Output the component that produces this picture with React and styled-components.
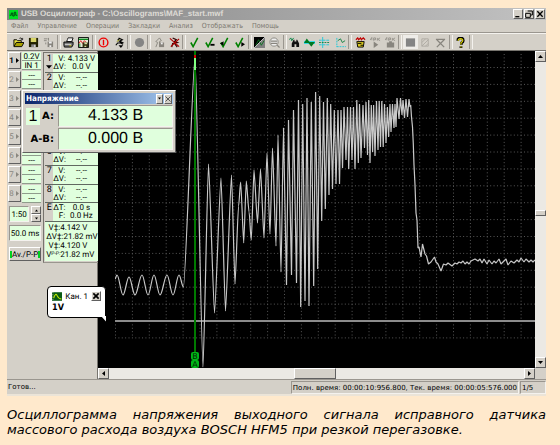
import React from 'react'
import styled, { createGlobalStyle, css } from 'styled-components'

const GlobalStyle = createGlobalStyle`
  * {
    box-sizing: border-box;
  }
  body {
    margin: 0;
    background: #ffe9cc;
    font-family: Roboto, "Liberation Sans", sans-serif;
    font-size: 8px;
    color: #000;
    text-rendering: geometricPrecision;
  }
  button, input {
    font: inherit;
    color: inherit;
    text-rendering: inherit;
    margin: 0;
    padding: 0;
    border-radius: 0;
  }
`

const raised = css`
  border: 1px solid;
  border-color: #fff #606060 #606060 #fff;
  background: #d4d0c8;
`

const sunken = css`
  border: 1px solid;
  border-color: #9a968f #f4f2ee #f4f2ee #9a968f;
`

const Page = styled.main`
  padding: 8px 14px 0 7px;
`

const Window = styled.section`
  position: relative;
  background: #d4d0c8;
  border-bottom: 2px solid #ebe4d8;
`

const TitleBar = styled.header`
  display: flex;
  align-items: center;
  gap: 3px;
  height: 12px;
  padding: 0 1px 0 2px;
  background: linear-gradient(90deg, #828282, #c2c2c2);
`

const Title = styled.h1`
  flex: 1;
  margin: 0;
  font-family: "Liberation Sans", sans-serif;
  font-size: 8px;
  line-height: 12px;
  font-weight: 700;
  color: #dedbd5;
  white-space: nowrap;
`

const WindowButtons = styled.div`
  display: flex;
  gap: 1px;
`

const CaptionButton = styled.button`
  ${raised}
  display: flex;
  align-items: center;
  justify-content: center;
  width: ${({ $size }) => $size || 10}px;
  height: 10px;
`

const Menu = styled.nav`
  display: flex;
  gap: 9px;
  height: 13px;
  padding-left: 4px;
  border-bottom: 1px solid #9a968f;
`

const MenuLink = styled.a`
  color: #7c7971;
  font-family: "DejaVu Sans Condensed", "DejaVu Sans", sans-serif;
  font-size: 7px;
  line-height: 12px;
  text-decoration: none;
`

const Toolbar = styled.div`
  display: flex;
  align-items: center;
  height: 18px;
  padding: 0 73px 0 4px;
  border-top: 1px solid #f4f2ee;
  border-bottom: 1px solid #77746e;
`

const ToolButton = styled.button`
  flex: 1;
  max-width: 16px;
  height: 14px;
  display: flex;
  align-items: center;
  justify-content: center;
  border: 0;
  background: ${({ $pressed }) => ($pressed ? '#eeece8' : 'none')};
`

const Separator = styled.span`
  width: 5px;
  height: 14px;
  display: flex;
  justify-content: center;

  &::before {
    content: '';
    width: 2px;
    border-left: 1px solid #9a968f;
    border-right: 1px solid #f4f2ee;
  }
`

const Workspace = styled.div`
  display: flex;
`

const SidePanel = styled.aside`
  display: flex;
  align-items: flex-start;
  gap: 1px;
  width: 91px;
  border-right: 1px solid #77746e;
`

const Controls = styled.div`
  width: 38px;
  padding: 1px 1px 0 1px;
  display: flex;
  flex-direction: column;
`

const Channel = styled.div`
  display: grid;
  grid-template-columns: 13px 1fr;
  gap: 1px;
  height: 19px;
`

const ChannelButton = styled.button`
  ${raised}
  height: 17px;
  display: flex;
  align-items: center;
  justify-content: center;
  gap: 1px;
  font-weight: ${({ $active }) => ($active ? 700 : 400)};
  color: ${({ $active }) => ($active ? '#000' : '#8a877f')};
`

const ChannelInfo = styled.div`
  display: flex;
  flex-direction: column;
`

const Cell = styled.span`
  height: 9px;
  line-height: 9px;
  text-align: center;
  background: #e0ffdd;
  border-bottom: 1px solid #8f9c8c;
`

const Settings = styled.div`
  display: flex;
  flex-direction: column;
  gap: 3px;
  padding: 2px 0 0 1px;
`

const Scale = styled.div`
  display: flex;
  gap: 2px;
  align-items: center;
`

const Field = styled.input`
  ${sunken}
  flex: 1;
  width: 100%;
  min-width: 0;
  min-height: 16px;
  background: #e0ffdd;
  text-align: center;
`

const Spinner = styled.div`
  width: 10px;
  display: flex;
  flex-direction: column;
`

const SpinButton = styled.button`
  ${raised}
  height: 8px;
  display: flex;
  align-items: center;
  justify-content: center;
`

const ModeButton = styled.button`
  ${raised}
  display: flex;
  align-items: center;
  justify-content: space-between;
  height: 14px;
  margin-top: 3px;
  white-space: nowrap;
`

const Lamp = styled.span`
  width: 2px;
  height: 7px;
  background: #00d020;
`

const Readings = styled.div`
  flex: 1;
  margin: 1px 1px 0 0;
  padding: 1px;
  border: 1px solid;
  border-color: #77746e #fff #9a968f #77746e;
`

const ReadingList = styled.div`
  display: grid;
  grid-template-rows: repeat(9, 1fr);
  height: 168px;
`

const Reading = styled.div`
  display: grid;
  grid-template-columns: 8px 1fr;
  border-bottom: 1px solid #606860;
`

const ReadingName = styled.span`
  display: flex;
  flex-direction: column;
  align-items: center;
  background: #d4d0c8;
  font-size: 9px;
  line-height: 10px;
`

const ReadingValues = styled.div`
  background: #e0ffdd;
`

const Value = styled.div`
  display: flex;
  height: 8px;
  line-height: 9px;
  white-space: nowrap;
`

const ValueLabel = styled.span`
  width: 12px;
  text-align: right;
`

const ValueText = styled.span`
  flex: 1;
  text-align: center;
`

const Summary = styled.div`
  padding: 1px 0 2px 1px;
  background: #e0ffdd;
`

const SummaryLine = styled.div`
  display: flex;
  height: 9px;
  line-height: 9px;
  white-space: nowrap;
`

const SummaryLabel = styled.span`
  flex: 0 0 14px;
  display: flex;
  justify-content: flex-end;
`

const Sub = styled.small`
  font-size: 5px;
`

const Scope = styled.div`
  flex: 1;
  display: grid;
  grid-template-columns: 1fr 11px;
  grid-template-rows: auto 11px;
`

const Screen = styled.svg`
  display: block;
  width: 100%;
  height: auto;
  background: #000;
`

const ScrollBar = styled.div`
  display: flex;
  flex-direction: ${({ $vertical }) => ($vertical ? 'column' : 'row')};
  background: #ebe9e4;
`

const ScrollButton = styled.button`
  ${raised}
  width: 11px;
  height: 11px;
  flex: none;
  display: flex;
  align-items: center;
  justify-content: center;
`

const ScrollTrack = styled.div`
  flex: 1;
  display: flex;
  flex-direction: inherit;
`

const ScrollSpace = styled.span`
  flex: ${({ $grow }) => $grow};
`

const ScrollThumb = styled.span`
  ${raised}
  flex: 0 0 ${({ $size }) => $size}px;
`

const StatusBar = styled.footer`
  display: flex;
  gap: 1px;
  height: 15px;
  border-top: 1px solid #9a968f;
  padding-top: 1px;
  font-family: "DejaVu Sans", sans-serif;
  font-size: 7px;
  line-height: 12px;
`

const Status = styled.span`
  flex: 1;
  padding-left: 1px;
`

const StatusPanel = styled.span`
  ${sunken}
  min-width: ${({ $width }) => $width}px;
  padding: 0 1px;
  white-space: nowrap;
`

const Palette = styled.section`
  position: absolute;
  left: 15px;
  top: 82px;
  width: 154px;
  padding: 2px;
  ${raised}
`

const PaletteBar = styled.header`
  display: flex;
  align-items: center;
  justify-content: space-between;
  height: 11px;
  padding: 0 1px;
  background: linear-gradient(90deg, #0a246a, #a6caf0);
`

const PaletteTitle = styled.h2`
  margin: 0;
  font-family: "DejaVu Sans Condensed", "DejaVu Sans", sans-serif;
  font-size: 8px;
  line-height: 11px;
  color: #fff;
`

const PaletteGrid = styled.div`
  display: grid;
  grid-template-columns: 32px 1fr;
  gap: 1px;
  padding-top: 1px;
`

const PaletteLabel = styled.div`
  display: flex;
  align-items: center;
  justify-content: flex-end;
  gap: 2px;
  padding-right: 3px;
  font-family: "DejaVu Sans", sans-serif;
  font-size: 10px;
  font-weight: 700;
`

const PaletteChannel = styled.span`
  width: 14px;
  line-height: 17px;
  text-align: center;
  background: #e0ffdd;
  font-family: "Liberation Sans", sans-serif;
  font-size: 16px;
  font-weight: 400;
`

const PaletteValue = styled.output`
  ${sunken}
  height: 22px;
  line-height: 20px;
  text-align: center;
  background: #e0ffdd;
  font-family: "Liberation Sans", sans-serif;
  font-size: 16px;
`

const Callout = styled.div`
  position: absolute;
  left: 40px;
  top: 278px;
  width: 59px;
  height: 32px;
  padding: 3px 4px;
  background: #fff;
  border: 1px solid #000;
  border-radius: 4px 4px 0 4px;
`

const CalloutTail = styled.svg`
  position: absolute;
  right: -1px;
  top: 29px;
`

const CalloutHead = styled.div`
  display: flex;
  align-items: center;
  gap: 3px;
  height: 12px;
`

const CalloutName = styled.span`
  flex: 1;
  white-space: nowrap;
`

const CalloutValue = styled.strong`
  display: block;
  font-family: "DejaVu Sans Condensed", "DejaVu Sans", sans-serif;
  font-size: 9px;
  line-height: 12px;
`

const Caption = styled.p`
  margin: 11px 0 0;
  font-family: "DejaVu Sans", sans-serif;
  font-size: 13px;
  line-height: 15px;
  font-style: italic;
  text-align: justify;
  text-rendering: auto;
`

const Icon = ({ children, size = 12 }) => (
  <svg width={size} height={size} viewBox="0 0 12 12" fill="none" aria-hidden="true">
    {children}
  </svg>
)

const Arrow = ({ dir, size = 5 }) => {
  const points = {
    up: '0,4 5,4 2.5,1',
    down: '0,1 5,1 2.5,4',
    left: '4,0 4,5 1,2.5',
    right: '1,0 1,5 4,2.5',
  }
  return (
    <svg width={size} height={size} viewBox="0 0 5 5" aria-hidden="true">
      <polygon points={points[dir]} fill="currentColor" />
    </svg>
  )
}

const Check = ({ children }) => (
  <>
    <path d="M2 6l2.500 4.500L9.500 1" stroke="#008000" strokeWidth="1.700" />
    {children}
  </>
)

const Eprom = ({ children }) => (
  <>
    <path d="M0 3.500L2 .500M2 .500v3M4 4V1h2v2H4M8 4V1M11 1L8.500 2.500 11 4" stroke="#88857e" strokeWidth=".8" />
    {children}
  </>
)

const icons = {
  open: (
    <>
      <path d="M1 10V3h3l1 1h4v2" fill="#e8e040" stroke="#000" />
      <path d="M1 10.500L3.500 6H12L9.500 10.500z" fill="#a8a000" stroke="#000" />
      <path d="M7 1.500q2-1.500 3 1M10.500 1v2h-2" stroke="#000" strokeWidth=".8" />
    </>
  ),
  save: (
    <>
      <path d="M1 1h10v10H1z" fill="#202000" />
      <path d="M3 1h6v4.500H3z" fill="#d8d468" />
      <path d="M3.500 8h5v3h-5z" fill="#888" />
      <path d="M7 8.500h1V11H7z" fill="#fff" />
    </>
  ),
  copy: (
    <>
      <path d="M5 5h6v6H5z" fill="#88857e" />
      <path d="M6.500 5h3v2h-3zM7 9h2v2H7z" fill="#eee" />
      <path d="M1 2h4M1 4h3M6 1v3M3 6v2" stroke="#88857e" />
    </>
  ),
  print: (
    <>
      <path d="M4 5l1.500-4H11L9.500 5z" fill="#fff" stroke="#000" />
      <path d="M1 5.500h10v3L9.500 11h-8L1 9z" fill="#707070" stroke="#000" />
      <path d="M2 8h7M5 2.500h4" stroke="#ddd" />
      <path d="M7 9.500h2" stroke="#d0c000" />
    </>
  ),
  exportChart: (
    <>
      <path d="M.5.500h11v11H.500z" fill="#e8e8d8" stroke="#000" />
      <path d="M1 2.500h10" stroke="#0b8a20" strokeWidth="1.500" />
      <path d="M1 7l2-3 2 3 2-3 2 2" stroke="#e02020" />
      <path d="M5 6h6v5H5z" fill="#303010" />
      <path d="M7 6h3v2H7zM7 9.500h2V11H7z" fill="#d8d8a0" />
      <path d="M2 7v4" stroke="#0b8a20" />
    </>
  ),
  power: (
    <>
      <circle cx="6" cy="6" r="4.800" stroke="#f00000" strokeWidth="1.500" />
      <path d="M6 3v6" stroke="#f00000" strokeWidth="1.500" />
    </>
  ),
  run: (
    <>
      <path d="M5 1l4 2-3 1.500L9 6 4 6.500 2 9M6 6l4 2M4 3l2-1" stroke="#000" strokeWidth="1.300" />
      <path d="M5 9h5L7.500 12z" fill="#000" />
      <path d="M3 5l3-2" stroke="#909000" />
    </>
  ),
  record: <circle cx="6" cy="6" r="5" fill="#848484" />,
  hand: (
    <>
      <path d="M2 11L4 6 2 5l4-4 2 3-2 1v6" stroke="#88857e" />
      <path d="M6 6h5v5H6z" fill="#88857e" />
      <path d="M7.500 6h2v2h-2z" fill="#eee" />
    </>
  ),
  stopRun: (
    <>
      <path d="M4 1l4 2-2 2 3 1-5 1-1 4M6 7l3 4" stroke="#300" strokeWidth="1.300" />
      <path d="M1 1.500l10 9M11 2L2 10.500" stroke="#b00000" strokeWidth="1.300" />
    </>
  ),
  check: <Check />,
  checkMinus: <Check><path d="M7 8.500h4.500" stroke="#000" strokeWidth="2" /></Check>,
  checkPrev: <Check><path d="M5 4.500v5L1 7z" fill="#000" /></Check>,
  checkNext: <Check><path d="M8 5.500v5l4-2.500z" fill="#000" /></Check>,
  invert: (
    <>
      <path d="M0 0h12L0 12z" fill="#000" />
      <path d="M12 0v12H0z" fill="#808080" />
      <path d="M2 9l3-6 3 6 3-5" stroke="#0a7020" />
      <path d="M0 12L12 0" stroke="#ddd" strokeWidth=".8" />
    </>
  ),
  zoomText: (
    <>
      <circle cx="5.500" cy="5.500" r="4.500" fill="#eee" stroke="#88857e" />
      <path d="M2 4.500h7M2 7h7M9 9l2.500 2.500" stroke="#88857e" strokeWidth="1.300" />
    </>
  ),
  find: (
    <>
      <path d="M0 3l2-2 1 3 2-3" stroke="#008040" />
      <path d="M3 11V7l2-4h1v2h2V3h1l2 4v4H8V8H6v3z" fill="#101010" />
    </>
  ),
  wave: (
    <>
      <path d="M0 4.500h12v3H0z" fill="#20d8e8" />
      <path d="M0 6.500l3-5 4 5H0zM4 5.500h8l-4 5z" fill="#007820" />
    </>
  ),
  levels: (
    <>
      <path d="M0 3.500h12M0 8.500h12" stroke="#20c8d8" strokeDasharray="3 1" />
      <path d="M4 0v12" stroke="#20c8d8" />
      <path d="M0 6h12" stroke="#108040" strokeDasharray="2 1" />
    </>
  ),
  points: (
    <>
      <path d="M2 1v10M2 10.500h10" stroke="#20c8d8" strokeDasharray="2 1" />
      <path d="M3 4l3-2 2 4 3-2" stroke="#108040" />
    </>
  ),
  chip: (
    <>
      <path d="M1 3l2-2 1 2 2-2 1 2 2-2 2 2" stroke="#c00000" strokeWidth="1.300" />
      <path d="M2 5h8l-1 6H3z" fill="#d8c820" stroke="#000" />
      <path d="M3 7h4M6 9h3" stroke="#000" />
    </>
  ),
  epromPlay: <Eprom><path d="M4 5v7l5-3.500z" fill="#88857e" /></Eprom>,
  epromStop: <Eprom><path d="M2 6h8v5.500H2zM4.500 4.500h3V6h-3z" fill="#88857e" /></Eprom>,
  block: <path d="M1 1.500h10v9H1z" fill="#848484" />,
  hatch: (
    <path d="M2 2h7v8H2zM2 6l4-4M2 10l7-7M6 10l3-3" stroke="#aaa69f" strokeWidth=".9" />
  ),
  cross: <path d="M1 2.500h10M2 3l8 8M10 3L2 11" stroke="#88857e" strokeWidth="1.400" />,
  help: (
    <>
      <path d="M3 4q0-3 3-3t3 3q0 1.500-2 2.500v2M6.500 10v2" stroke="#000" strokeWidth="3" />
      <path d="M3.500 4q0-2.300 2.500-2.300T8.500 4q0 1-2 2.200v2M6.500 10v1.500" stroke="#d8d000" strokeWidth="1.300" />
    </>
  ),
  app: (
    <>
      <path d="M0 0h12v12H0z" fill="#00e020" />
      <path d="M1 7h2V4h2v4h2V3h2v4h2" stroke="#004010" strokeWidth="1.200" />
    </>
  ),
  channel: (
    <>
      <path d="M0 1h12v10H0z" fill="#0a5a14" />
      <path d="M1 1v10" stroke="#d0d0d0" strokeDasharray="1 1" />
      <path d="M2 8q2-7 4-3t5 4" stroke="#c8f000" strokeWidth="1.200" />
    </>
  ),
}

const tools = [
  [['open', 'Открыть'], ['save', 'Сохранить'], ['copy', 'Копировать']],
  [['print', 'Печать'], ['exportChart', 'Экспорт']],
  [['power', 'Питание'], ['run', 'Пуск']],
  [['record', 'Запись']],
  [['hand', 'Сохранить настройки'], ['stopRun', 'Стоп']],
  [['check', 'Закладка'], ['checkMinus', 'Удалить закладку'], ['checkPrev', 'Назад'], ['checkNext', 'Вперёд']],
  [['invert', 'Инверсия'], ['zoomText', 'Масштаб']],
  [['find', 'Поиск'], ['wave', 'Сигнал'], ['levels', 'Уровни'], ['points', 'Точки']],
  [['chip', 'Сценарий'], ['epromPlay', 'Выполнить'], ['epromStop', 'Прервать']],
  [['block', 'Панель'], ['hatch', 'Область'], ['cross', 'Очистить']],
  [['help', 'Справка']],
]

const menu = ['Файл', 'Управление', 'Операции', 'Закладки', 'Анализ', 'Отображать', 'Помощь']

const channels = [1, 2, 3, 4, 5, 6, 7, 8]

const readings = [
  { name: '1', rows: [['V:', '4.133 V'], ['ΔV:', '0.0 V']] },
  ...[2, 3, 4, 5, 6, 7, 8].map((n) => ({ name: n, rows: [['V:', '--.--'], ['ΔV:', '--.--']] })),
  { name: 'E', rows: [['ΔT:', '0.0 s'], ['F:', '0.0 Hz']] },
]

const summary = [
  { label: 'V‡:', value: '4.142 V' },
  { label: 'ΔV‡:', value: '21.82 mV' },
  { label: 'V‡:', value: '4.120 V' },
  { label: 'V', sub: 'P-P', value: '21.82 mV' },
]

// turning points of the signal: idle ripple, first surge, then the slower swings
const swings = [
  [115, 279], [117, 275], [123, 295], [129, 277], [135, 295], [142, 275], [148, 295],
  [154, 275], [160, 295], [167, 275], [173, 295], [179, 275], [183.5, 287], [195, 57],
  [203, 367], [208.5, 164], [214.5, 313], [221, 178], [225.5, 311], [231.5, 175],
  [235, 284], [238.5, 206], [240.7, 182], [243.7, 243], [246.3, 181], [249, 212],
  [251.3, 240], [254, 170], [257.5, 223], [260.5, 169], [264, 238], [267, 153],
  [270, 234], [272.5, 148], [276, 246], [278, 135], [281, 272], [283.5, 128],
]

// rev-up burst and the fall back to idle
const burst = [
  [286.5, 285], [288.5, 120], [291.5, 275], [293.5, 110], [296.5, 283], [298.5, 100],
  [300.7, 307], [302.7, 104], [305, 301], [307, 98], [309, 306], [311.3, 102],
  [313.7, 286], [315.6, 92], [317.7, 269], [319.7, 96], [321.7, 221], [323.5, 102],
  [325.3, 209], [327.3, 98], [329, 195], [330.7, 104], [332.5, 189], [334.3, 110],
  [336, 184], [338, 110], [339.5, 184], [341, 110], [342.5, 168], [344, 107],
  [346, 160], [347.5, 107], [348.7, 169], [350.5, 107], [352, 160], [353.5, 107],
  [355, 169], [356.8, 100], [358.3, 163], [359.5, 104], [361, 158], [363, 105],
  [364.5, 148], [366, 102], [367.5, 155], [368.7, 100], [370, 163], [371.3, 105],
  [372.6, 152], [373.6, 105], [375, 156], [376.5, 101], [378, 150], [379.2, 101],
  [380.5, 147], [381.8, 101], [383.2, 147], [384.5, 104], [386, 143], [387.4, 107],
  [388.6, 137], [390, 104], [391, 132], [392.5, 104], [394, 128], [395, 104],
  [396, 127], [397, 98], [399, 119], [400.5, 98], [402, 115], [403, 100],
  [404.5, 118], [406, 99], [407.5, 117], [409, 99], [410, 107], [410.7, 105],
  [411.5, 117], [412.5, 127], [413.3, 144], [414, 165], [415, 185], [416, 213],
  [417, 220], [418, 248], [419, 247], [421, 257], [422.5, 244], [425, 254], [426.5, 256],
  [428.5, 264], [431, 262], [434.5, 257], [436, 262], [438, 264], [441, 271],
  [443.5, 264], [446, 265], [448, 263], [452, 266], [455, 263], [457, 264],
  [459, 262], [461, 263], [463, 261], [465, 264], [467, 262], [469, 264], [471, 261],
  [475, 259], [478, 261], [480, 259], [482, 263], [484, 259], [487, 264], [489, 260],
  [492, 264], [494, 261], [496, 263], [499, 259], [501, 264], [504, 261], [506, 259],
  [508, 265], [511, 261], [514, 263], [517, 260], [519, 262], [521, 258], [524, 262],
  [526, 259], [529, 262], [531, 260], [533, 262], [535, 260],
]

const tracePath = () => {
  const [first, ...rest] = swings
  let d = `M${first}`
  let prev = first
  rest.forEach((p) => {
    // tall swings come to a sharper tip than the idle ripple
    const bend = Math.abs(p[1] - prev[1]) > 30 ? 0.18 : 0.36
    const dx = (p[0] - prev[0]) * bend
    d += ` C${prev[0] + dx},${prev[1]} ${p[0] - dx},${p[1]} ${p}`
    prev = p
  })
  return `${d} L${burst.join(' ')}`
}

const GRID = 16.9
const columns = Array.from({ length: 25 }, (_, i) => 115.5 + i * GRID)
const rows = Array.from({ length: 17 }, (_, i) => 67.5 + i * GRID)

const Oscillogram = () => (
  <Screen viewBox="98 51 437 317" role="img" aria-label="Осциллограмма MAF_start.mwf">
    <g stroke="#585858" strokeDasharray="1 2.38">
      {columns.map((x) => (
        <line key={x} x1={x} x2={x} y1="54" y2="338" />
      ))}
      {rows.map((y) => (
        <line key={y} x1="115" x2="535" y1={y} y2={y} />
      ))}
    </g>
    <path d="M115 321h420" stroke="#8c8c8c" strokeWidth="2" />
    <path d={tracePath()} fill="none" stroke="#c8c8c8" strokeWidth="1.2" strokeLinejoin="bevel" />
    <path d="M195 51v302" stroke="#007a00" strokeWidth="2" />
    <path d="M195 58v12" stroke="#80ff80" strokeWidth="2" />
    <path d="M195 55v3" stroke="#d00000" strokeWidth="2" />
    {['B', 'A'].map((name, i) => (
      <g key={name}>
        <rect x="191" y={352 + i * 8} width="8" height="8" rx="2" fill="#00b818" />
        <text
          x="195"
          y={359 + i * 8}
          textAnchor="middle"
          fontFamily="DejaVu Sans"
          fontSize="8"
          fill="#002800"
        >
          {name}
        </text>
      </g>
    ))}
  </Screen>
)

const App = () => {
  return (
    <Page>
      <GlobalStyle />
      <Window>
        <TitleBar>
          <Icon size={9}>{icons.app}</Icon>
          <Title>USB Осциллограф - C:\Oscillograms\MAF_start.mwf</Title>
          <WindowButtons>
            <CaptionButton aria-label="Свернуть">
              <Icon size={8}><path d="M2 10h6" stroke="#000" strokeWidth="2" /></Icon>
            </CaptionButton>
            <CaptionButton aria-label="Восстановить">
              <Icon size={8}>
                <path d="M4 1.500h7v6H9M1 5h7v6H1z" stroke="#000" strokeWidth="1.500" />
              </Icon>
            </CaptionButton>
            <CaptionButton aria-label="Закрыть">
              <Icon size={8}><path d="M2 2l8 8M10 2L2 10" stroke="#000" strokeWidth="2" /></Icon>
            </CaptionButton>
          </WindowButtons>
        </TitleBar>

        <Menu>
          {menu.map((item) => (
            <MenuLink key={item} href="#">{item}</MenuLink>
          ))}
        </Menu>

        <Toolbar>
          {tools.map((group, i) => (
            <React.Fragment key={i}>
              {i > 0 && <Separator />}
              {group.map(([icon, label]) => (
                <ToolButton key={icon} aria-label={label} $pressed={icon === 'block'}>
                  <Icon size={11}>{icons[icon]}</Icon>
                </ToolButton>
              ))}
            </React.Fragment>
          ))}
          <Separator />
        </Toolbar>

        <Workspace>
          <SidePanel>
            <Controls>
              {channels.map((n) => (
                <Channel key={n}>
                  <ChannelButton $active={n === 1}>
                    {n}
                    <Arrow dir="right" size={5} />
                  </ChannelButton>
                  <ChannelInfo>
                    <Cell>{n === 1 ? '0.2V' : '---'}</Cell>
                    <Cell>{n === 1 ? 'IN 1' : '---'}</Cell>
                  </ChannelInfo>
                </Channel>
              ))}
              <Settings>
                <Scale>
                  <Field aria-label="Масштаб" defaultValue="1:50" />
                  <Spinner>
                    <SpinButton aria-label="Больше"><Arrow dir="up" size={3} /></SpinButton>
                    <SpinButton aria-label="Меньше"><Arrow dir="down" size={3} /></SpinButton>
                  </Spinner>
                </Scale>
                <Field aria-label="Развёртка" defaultValue="50.0 ms" />
                <ModeButton>
                  <Lamp />
                  Av./P-P
                  <Lamp />
                </ModeButton>
              </Settings>
            </Controls>
            <Readings>
              <ReadingList>
                {readings.map(({ name, rows: values }) => (
                  <Reading key={name}>
                    <ReadingName>
                      {name}
                      {name === '1' && <Arrow dir="down" size={6} />}
                    </ReadingName>
                    <ReadingValues>
                      {values.map(([label, value]) => (
                        <Value key={label}>
                          <ValueLabel>{label}</ValueLabel>
                          <ValueText>{value}</ValueText>
                        </Value>
                      ))}
                    </ReadingValues>
                  </Reading>
                ))}
              </ReadingList>
              <Summary>
                {summary.map(({ label, sub, value }, i) => (
                  <SummaryLine key={i}>
                    <SummaryLabel>
                      {label}
                      {sub && <Sub>{sub}:</Sub>}
                    </SummaryLabel>
                    {value}
                  </SummaryLine>
                ))}
              </Summary>
            </Readings>
          </SidePanel>

          <Scope>
            <Oscillogram />
            <ScrollBar $vertical>
              <ScrollButton aria-label="Вверх"><Arrow dir="up" /></ScrollButton>
              <ScrollTrack>
                <ScrollSpace $grow={148} />
                <ScrollThumb $size={6} />
                <ScrollSpace $grow={141} />
              </ScrollTrack>
              <ScrollButton aria-label="Вниз"><Arrow dir="down" /></ScrollButton>
            </ScrollBar>
            <ScrollBar>
              <ScrollButton aria-label="Влево"><Arrow dir="left" /></ScrollButton>
              <ScrollTrack>
                <ScrollSpace $grow={185} />
                <ScrollThumb $size={42} />
                <ScrollSpace $grow={188} />
              </ScrollTrack>
              <ScrollButton aria-label="Вправо"><Arrow dir="right" /></ScrollButton>
            </ScrollBar>
          </Scope>
        </Workspace>

        <StatusBar>
          <Status>Готов...</Status>
          <StatusPanel $width={216}>
            Полн. время: 00:00:10:956.800, Тек. время: 00:00:05:576.000
          </StatusPanel>
          <StatusPanel $width={26}>1/5</StatusPanel>
        </StatusBar>

        <Palette>
          <PaletteBar>
            <PaletteTitle>Напряжение</PaletteTitle>
            <WindowButtons>
              <CaptionButton $size={7} aria-label="Свернуть окно">
                <Arrow dir="down" size={3} />
              </CaptionButton>
              <CaptionButton $size={8} aria-label="Закрыть окно">
                <Icon size={6}><path d="M1 1l10 10M11 1L1 11" stroke="#555" strokeWidth="2" /></Icon>
              </CaptionButton>
            </WindowButtons>
          </PaletteBar>
          <PaletteGrid>
            <PaletteLabel>
              <PaletteChannel>1</PaletteChannel>
              A:
            </PaletteLabel>
            <PaletteValue>4.133 В</PaletteValue>
            <PaletteLabel>A-B:</PaletteLabel>
            <PaletteValue>0.000 В</PaletteValue>
          </PaletteGrid>
        </Palette>

        <Callout>
          <CalloutHead>
            <Icon size={11}>{icons.channel}</Icon>
            <CalloutName>Кан. 1</CalloutName>
            <CaptionButton aria-label="Закрыть канал">
              <Icon size={8}><path d="M2 2l8 8M10 2L2 10" stroke="#000" strokeWidth="2.500" /></Icon>
            </CaptionButton>
          </CalloutHead>
          <CalloutValue>1V</CalloutValue>
          <CalloutTail width="6" height="6" viewBox="0 0 6 6" aria-hidden="true">
            <path d="M1 0h5v5.500z" fill="#fff" />
          </CalloutTail>
        </Callout>
      </Window>

      <Caption>
        Осциллограмма напряжения выходного сигнала исправного датчика массового расхода воздуха
        BOSCH HFM5 при резкой перегазовке.
      </Caption>
    </Page>
  )
}

export default App
